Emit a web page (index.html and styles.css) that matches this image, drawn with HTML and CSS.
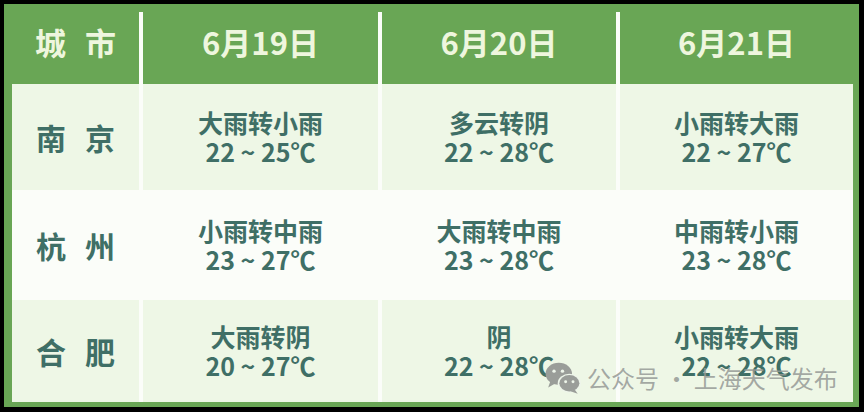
FILE: index.html
```html
<!DOCTYPE html>
<html lang="zh">
<head>
<meta charset="utf-8">
<link rel="stylesheet" href="styles.css">
</head>
<body>
<div class="frame">
  <div class="grid">
    <div class="hd city-h"><span class="spaced">城市</span></div>
    <div class="hd">6月19日</div>
    <div class="hd">6月20日</div>
    <div class="hd">6月21日</div>

    <div class="cell light city"><span class="spaced">南京</span></div>
    <div class="cell light"><div>大雨转小雨</div><div>22 ~ 25℃</div></div>
    <div class="cell light"><div>多云转阴</div><div>22 ~ 28℃</div></div>
    <div class="cell light"><div>小雨转大雨</div><div>22 ~ 27℃</div></div>

    <div class="cell white city"><span class="spaced">杭州</span></div>
    <div class="cell white"><div>小雨转中雨</div><div>23 ~ 27℃</div></div>
    <div class="cell white"><div>大雨转中雨</div><div>23 ~ 28℃</div></div>
    <div class="cell white"><div>中雨转小雨</div><div>23 ~ 28℃</div></div>

    <div class="cell light city"><span class="spaced">合肥</span></div>
    <div class="cell light"><div>大雨转阴</div><div>20 ~ 27℃</div></div>
    <div class="cell light"><div>阴</div><div>22 ~ 28℃</div></div>
    <div class="cell light"><div>小雨转大雨</div><div>22 ~ 28℃</div></div>
  </div>
  <div class="watermark">
    <svg class="wx" width="38" height="34" viewBox="0 0 36 32">
      <ellipse cx="14" cy="12" rx="12.5" ry="10.5" fill="#9a9d99"/>
      <path d="M6 19 L4 25 L11 21 Z" fill="#9a9d99"/>
      <circle cx="9.5" cy="9.5" r="1.6" fill="#eef5ea"/>
      <circle cx="17.5" cy="9.5" r="1.6" fill="#eef5ea"/>
      <ellipse cx="24" cy="21" rx="11" ry="9" fill="#eef5ea"/>
      <ellipse cx="24" cy="21" rx="9.5" ry="7.8" fill="#9a9d99"/>
      <path d="M29 27 L32 31 L25 28.5 Z" fill="#9a9d99"/>
      <circle cx="20.5" cy="19.5" r="1.4" fill="#eef5ea"/>
      <circle cx="27.5" cy="19.5" r="1.4" fill="#eef5ea"/>
    </svg>
    <span>公众号 · 上海天气发布</span>
  </div>
</div>
</body>
</html>
```
FILE: styles.css
```css
html, body {
  margin: 0;
  padding: 0;
  background: #000;
}
body {
  width: 864px;
  height: 412px;
  overflow: hidden;
  font-family: "Noto Sans CJK SC", "Noto Sans", sans-serif;
}
.frame {
  position: relative;
  margin: 4px 0 0 4px;
  width: 855px;
  height: 403px;
  box-sizing: border-box;
  background: #69a655;
  padding: 8px 6px 5px 8px;
}
.grid {
  display: grid;
  grid-template-columns: 127px 235px 234px 233px;
  grid-template-rows: 72px 106px 110px 102px;
  column-gap: 4px;
  background: #fbfdf9;
}
.hd {
  background: #69a655;
  color: #eef6de;
  font-weight: 700;
  font-size: 31px;
  display: flex;
  align-items: center;
  justify-content: center;
  padding-bottom: 14px;
}
.spaced {
  letter-spacing: 19px;
  margin-right: -19px;
}
.cell {
  display: flex;
  flex-direction: column;
  align-items: center;
  justify-content: center;
  color: #3f6f66;
  font-size: 25px;
  font-weight: 700;
  line-height: 29px;
}
.city {
  font-size: 30px;
  font-weight: 700;
}
.light { background: #eef7e6; }
.white { background: #fbfdf9; }
.watermark {
  position: absolute;
  left: 540px;
  top: 356px;
  display: flex;
  align-items: center;
  gap: 5px;
  color: rgba(150, 154, 150, 0.85);
  font-size: 24px;
  font-weight: 400;
}
```
